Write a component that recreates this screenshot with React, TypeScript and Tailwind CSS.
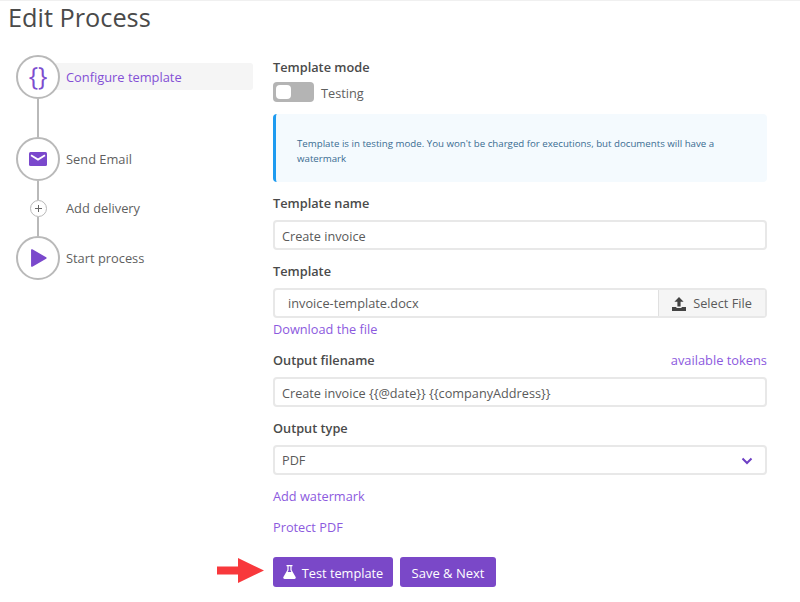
import React from "react";

const font = { fontFamily: '"Open Sans", "Noto Sans", sans-serif' };

function Circle({ children }: { children: React.ReactNode }) {
  return (
    <div className="w-11 h-11 shrink-0 rounded-full border-2 border-[#b9b9b9] bg-white flex items-center justify-center">
      {children}
    </div>
  );
}

function Label({ children }: { children: React.ReactNode }) {
  return <div className="text-[12.75px] leading-[18px] font-semibold text-[#4a4a4a]">{children}</div>;
}

function Field({ children, className = "" }: { children: React.ReactNode; className?: string }) {
  return (
    <div className={`h-[30px] rounded-[4px] border-2 border-[#e8e8e8] bg-white flex items-center pl-[7px] text-[12.7px] text-[#5a5a5a] ${className}`}>
      {children}
    </div>
  );
}

function Connector({ h }: { h: string }) {
  return (
    <div className="w-11 flex justify-center shrink-0">
      <div className={`w-[2px] bg-[#b9b9b9] ${h}`} />
    </div>
  );
}

export default function App() {
  return (
    <div className="w-[800px] h-[602px] overflow-hidden bg-white border-t border-[#f0f0f0]" style={font}>
      <h1 className="pl-2 h-[38px] text-[25.3px] leading-[33px] text-[#4a4a4a]">Edit Process</h1>
      <div className="flex pt-[16px]">
        {/* Steps */}
        <div className="w-[273px] shrink-0 pl-4 pr-5 text-[12.85px] text-[#5f5f5f]">
          <div className="relative flex items-center h-11">
            <div className="absolute left-[38px] right-0 top-[8px] h-[27px] rounded-[3px] bg-[#f5f5f5]" />
            <div className="relative">
              <Circle>
                <span className="text-[25px] leading-none text-[#7c4dcf] -mt-[4px]">{"{}"}</span>
              </Circle>
            </div>
            <span className="relative pl-[6px] pt-[2px] text-[#8450d6]">Configure template</span>
          </div>
          <Connector h="h-[38px]" />
          <div className="flex items-center h-11">
            <Circle>
              <svg width="18" height="14" viewBox="0 0 18 14">
                <rect width="18" height="14" rx="1.5" fill="#7a48cc" />
                <path d="M2 3.2 9 7.6l7-4.4" fill="none" stroke="#fff" strokeWidth="1.8" />
              </svg>
            </Circle>
            <span className="pl-[6px] pt-[2px]">Send Email</span>
          </div>
          <Connector h="h-[19px]" />
          <div className="flex items-center h-[17px]">
            <div className="w-11 flex justify-center">
              <div className="w-[17px] h-[17px] rounded-full border-[1.5px] border-[#b9b9b9] flex items-center justify-center">
                <svg width="9" height="9" viewBox="0 0 9 9">
                  <path d="M4.5 1v7M1 4.5h7" stroke="#666" strokeWidth="1" />
                </svg>
              </div>
            </div>
            <span className="pl-[6px]">Add delivery</span>
          </div>
          <Connector h="h-[19px]" />
          <div className="flex items-center h-11">
            <Circle>
              <svg width="17" height="20" viewBox="0 0 16 18" className="ml-[1px]">
                <path d="M1 1.5v15a.8.8 0 0 0 1.2.7l13-7.5a.8.8 0 0 0 0-1.4l-13-7.5A.8.8 0 0 0 1 1.5z" fill="#7a48cc" />
              </svg>
            </Circle>
            <span className="pl-[6px] pt-[1px]">Start process</span>
          </div>
        </div>

        {/* Form */}
        <div className="w-[494px] shrink-0 pt-[3px]">
          <Label>Template mode</Label>
          <div className="mt-[6px] flex items-center h-[20px]">
            <div className="w-[41px] h-[20px] rounded-[4px] bg-[#b4b4b4] p-[3px]">
              <div className="w-[15px] h-[14px] rounded-[4px] bg-white" />
            </div>
            <span className="pl-[7px] pt-[4px] text-[12.75px] text-[#5f5f5f]">Testing</span>
          </div>
          <div className="mt-[12px] h-[68px] rounded-[4px] border-l-[3px] border-[#1e9bf0] bg-[#f4fafe] pl-[21px] pr-[40px] pt-[6px] flex items-center text-[9.7px] leading-[15px] text-[#3a6c92]">
            <p>Template is in testing mode. You won't be charged for executions, but documents will have a watermark</p>
          </div>
          <div className="mt-[12px]"><Label>Template name</Label></div>
          <Field className="mt-[8px] pt-[3px]">Create invoice</Field>

          <div className="mt-[12px]"><Label>Template</Label></div>
          <div className="mt-[8px] h-[30px] flex rounded-[4px] border-2 border-[#e8e8e8] text-[12.75px] text-[#5a5a5a]">
            <div className="flex-1 flex items-center pl-[13px] pt-[1px]">invoice-template.docx</div>
            <div className="w-[107px] flex items-center justify-center gap-[6px] bg-[#f5f5f5] border-l border-[#e0e0e0] pt-[1px]">
              <svg width="14" height="14" viewBox="0 0 14 14">
                <path d="M7 0 2.4 4.8h3v4.6h3.2V4.8h3zM0 10h4.4v1h5.2v-1H14v4H0z" fill="#444" />
              </svg>
              <span className="pl-[1px]">Select File</span>
            </div>
          </div>
          <div className="mt-[2px] text-[12.75px] leading-[18px] text-[#8c5ade]">Download the file</div>

          <div className="mt-[13px] flex justify-between">
            <Label>Output filename</Label>
            <span className="text-[12.85px] leading-[18px] text-[#8c5ade]">available tokens</span>
          </div>
          <Field className="mt-[8px] pt-[3px]">{"Create invoice {{@date}} {{companyAddress}}"}</Field>

          <div className="mt-[12px]"><Label>Output type</Label></div>
          <Field className="mt-[8px] justify-between pr-[12px] pt-[1px]">
            <span>PDF</span>
            <svg width="12" height="8" viewBox="0 0 12 8">
              <path d="M1.5 1.5 6 6l4.5-4.5" fill="none" stroke="#6d3fc4" strokeWidth="2" />
            </svg>
          </Field>

          <div className="mt-[12px] text-[12.75px] leading-[18px] text-[#8c5ade]">Add watermark</div>
          <div className="mt-[13px] text-[12.75px] leading-[18px] text-[#8c5ade]">Protect PDF</div>

          <div className="relative mt-[21px] flex gap-[7px]">
            <svg className="absolute -left-[56px] top-[1px]" width="47" height="25" viewBox="0 0 47 25">
              <path d="M0 8.5h21V0l26 12.5L21 25v-8.5H0z" fill="#f8383c" />
            </svg>
            <div className="w-[120px] h-[30px] rounded-[3px] bg-[#7a48c8] text-white text-[12.75px] flex items-center justify-center gap-[6px] pt-[3px]">
              <svg width="13" height="14" viewBox="0 0 13 14" className="-mt-[3px]">
                <path fillRule="evenodd" d="M3.5 0h6v1.3H8.6v3.6l4 7a1.4 1.4 0 0 1-1.2 2.1H1.6A1.4 1.4 0 0 1 .4 11.9l4-7V1.3h-.9zM5.6 1.3v3.9L4.6 7h3.8L7.4 5.2V1.3z" fill="#fff" />
              </svg>
              <span>Test template</span>
            </div>
            <div className="w-[96px] h-[30px] rounded-[3px] bg-[#7a48c8] text-white text-[13px] flex items-center justify-center pt-[3px]">
              Save &amp; Next
            </div>
          </div>
        </div>
      </div>
    </div>
  );
}
